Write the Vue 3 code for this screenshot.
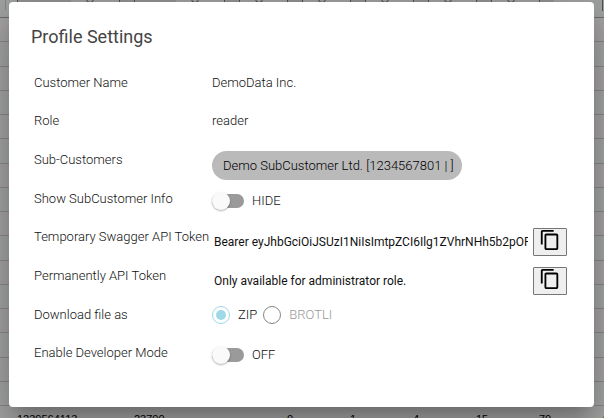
<script setup>
import { ref } from 'vue'

const showInfo = ref(false)
const developerMode = ref(false)
const format = ref('zip')

const tokens = [
  {
    id: 'swagger-token',
    label: 'Temporary Swagger API Token',
    value: 'Bearer eyJhbGciOiJSUzI1NiIsImtpZCI6Ilg1ZVhrNHh5b2pORnVtMWtsMll0djhkbE5QNC1jNTdkTzZR',
  },
  {
    id: 'api-token',
    label: 'Permanently API Token',
    value: 'Only available for administrator role.',
  },
]

const filters = 7
const emptyRows = 16
const lastRow = ['1239564113', '23700', '0', '1', '4', '15', '70']

function copy(text) {
  navigator.clipboard?.writeText(text)
}
</script>

<template>
  <div class="screen">
    <div class="sheet" aria-hidden="true">
      <div class="sheet-head">
        <span class="edge"></span>
        <span v-for="n in filters" :key="n" class="filter"><i class="box"><i class="funnel"></i></i></span>
        <span class="filter"></span>
      </div>
      <div v-for="n in emptyRows" :key="n" class="sheet-row"><span class="tail">0</span></div>
      <div class="sheet-row last">
        <span></span>
        <span v-for="(cell, i) in lastRow" :key="i">{{ cell }}</span>
        <span class="tail">0</span>
      </div>
    </div>

    <div class="backdrop">
      <section class="dialog" role="dialog" aria-labelledby="dialog-title">
        <h1 id="dialog-title">Profile Settings</h1>
        <div class="rows">
          <div class="row">
            <span class="label">Customer Name</span>
            <span class="value">DemoData Inc.</span>
          </div>
          <div class="row tall">
            <span class="label">Role</span>
            <span class="value">reader</span>
          </div>
          <div class="row tall">
            <span class="label">Sub-Customers</span>
            <span class="chip">Demo SubCustomer Ltd. [1234567801 | ]</span>
          </div>
          <div class="row">
            <label class="label" for="show-info">Show SubCustomer Info</label>
            <div class="toggle">
              <input id="show-info" v-model="showInfo" type="checkbox" role="switch" />
              <span>{{ showInfo ? 'SHOW' : 'HIDE' }}</span>
            </div>
          </div>
          <div v-for="token in tokens" :key="token.id" class="row tall">
            <label class="label" :for="token.id">{{ token.label }}</label>
            <div class="token">
              <input :id="token.id" type="text" readonly :value="token.value" />
              <button type="button" aria-label="Copy" @click="copy(token.value)">
                <svg viewBox="0 0 24 24" width="22" height="22">
                  <path d="M16 1H4c-1.1 0-2 .9-2 2v14h2V3h12V1zm3 4H8c-1.1 0-2 .9-2 2v14c0 1.1.9 2 2 2h11c1.1 0 2-.9 2-2V7c0-1.1-.9-2-2-2zm0 16H8V7h11v14z" />
                </svg>
              </button>
            </div>
          </div>
          <div class="row">
            <span id="format-label" class="label">Download file as</span>
            <div class="radios" role="radiogroup" aria-labelledby="format-label">
              <label><input v-model="format" type="radio" name="format" value="zip" />ZIP</label>
              <label class="off"><input v-model="format" type="radio" name="format" value="brotli" disabled />BROTLI</label>
            </div>
          </div>
          <div class="row">
            <label class="label" for="dev-mode">Enable Developer Mode</label>
            <div class="toggle">
              <input id="dev-mode" v-model="developerMode" type="checkbox" role="switch" />
              <span>{{ developerMode ? 'ON' : 'OFF' }}</span>
            </div>
          </div>
        </div>
      </section>
    </div>
  </div>
</template>

<style>
body {
  overflow: hidden;
}
</style>

<style scoped>
.screen {
  display: grid;
  height: 100vh;
  overflow: hidden;
  font-family: Roboto, "Liberation Sans", sans-serif;
  font-size: 13px;
  line-height: 18px;
}
.screen > * {
  grid-area: 1 / 1;
  min-width: 0;
  min-height: 0;
}

/* data sheet behind the dialog */
.sheet {
  display: grid;
  grid-template-rows: 18px repeat(16, 1fr) 12px;
  overflow: hidden;
  font: 11px/24px "Liberation Sans", sans-serif;
}
.sheet-head,
.last {
  display: grid;
  grid-template-columns: 17px 117px 105px repeat(6, 63px);
}
.sheet-head {
  background: #eef1f0;
  border-bottom: 1px solid #a3a3a3;
}
.edge {
  border-right: 1px solid #c6c6c6;
  margin: 0 11px 7px 0;
}
.filter {
  display: flex;
  justify-content: flex-end;
  overflow: hidden;
  border-left: 1px solid #777;
  background: #d8d8d8;
}
.filter:last-child {
  background: none;
  margin: 0 0 6px 48px;
}
.box {
  width: 48px;
  margin-right: 14px;
  background: #ececec;
  border-right: 1px solid #777;
}
.funnel {
  display: block;
  width: 6px;
  height: 8px;
  margin: -7px 0 0 15px;
  border: 1px solid #666;
  border-radius: 4px;
}
.sheet-row {
  display: flex;
  justify-content: flex-end;
  min-height: 0;
  overflow: hidden;
  background: #f2f6f4;
  border-bottom: 1px solid #ccc;
}
.sheet-row:nth-child(even) {
  background: #f7f4f4;
}
.sheet-row.last {
  display: grid;
  border: 0;
  line-height: 26px;
  background: #f4f4f4;
}
.tail {
  margin-right: -5px;
}
.last .tail {
  margin-left: 49px;
}
.last span:nth-child(n + 4):not(.tail) {
  padding-left: 48px;
}

.backdrop {
  z-index: 1;
  padding: 2px 10px 11px 9px;
  background: rgba(0, 0, 0, 0.32);
}

/* dialog */
.dialog {
  padding: 23px 27px 25px 22px;
  border-radius: 4px;
  background: #fff;
  color: #111;
  box-shadow:
    0 11px 15px -7px rgba(0, 0, 0, 0.2),
    0 24px 38px 3px rgba(0, 0, 0, 0.14),
    0 9px 46px 8px rgba(0, 0, 0, 0.12);
}
h1 {
  margin: 0 0 25px;
  font-size: 18px;
  font-weight: 400;
  line-height: 24px;
  color: #444;
}
.rows {
  padding-left: 3px;
  font-weight: 300;
}
.row {
  display: grid;
  grid-template-columns: 178px minmax(0, 1fr);
  align-items: start;
  min-height: 38px;
}
.tall {
  min-height: 39px;
}
.label {
  white-space: nowrap;
}
.chip {
  justify-self: start;
  padding: 0 8px 0 11px;
  border-radius: 15px;
  background: #bababa;
  color: #000;
  line-height: 29px;
}

.toggle {
  display: flex;
  align-items: center;
  gap: 8px;
  height: 22px;
}
.toggle input {
  appearance: none;
  display: flex;
  align-items: center;
  width: 32px;
  height: 14px;
  margin: 0;
  border-radius: 7px;
  background: #9a9a9a;
}
.toggle input::before {
  content: "";
  width: 18px;
  height: 18px;
  flex: none;
  border-radius: 50%;
  background: #fafafa;
  box-shadow: 0 1px 2px rgba(0, 0, 0, 0.3);
}
.toggle input:checked::before {
  margin-left: 14px;
}

.token {
  display: flex;
  gap: 5px;
}
.token input {
  flex: 1;
  min-width: 0;
  padding: 0 0 0 2px;
  border: 0;
  background: none;
  color: #111;
  font: 12px/16px Roboto, "Liberation Sans", sans-serif;
}
.token button {
  display: flex;
  justify-content: center;
  width: 34px;
  height: 28px;
  padding: 0;
  border: 1px solid #767676;
  border-radius: 1px;
  background: #efefef;
}

.radios {
  display: flex;
  gap: 6px;
}
.radios label {
  display: flex;
  align-items: center;
  gap: 8px;
  height: 18px;
}
.radios input {
  appearance: none;
  width: 18px;
  height: 18px;
  margin: 0;
  border: 1px solid #9fd8e6;
  border-radius: 50%;
}
.radios input:checked {
  padding: 3px;
  background: #9fd8e6 content-box;
}
.radios input:disabled {
  border-color: #888;
}
.off {
  color: #999;
}
</style>
